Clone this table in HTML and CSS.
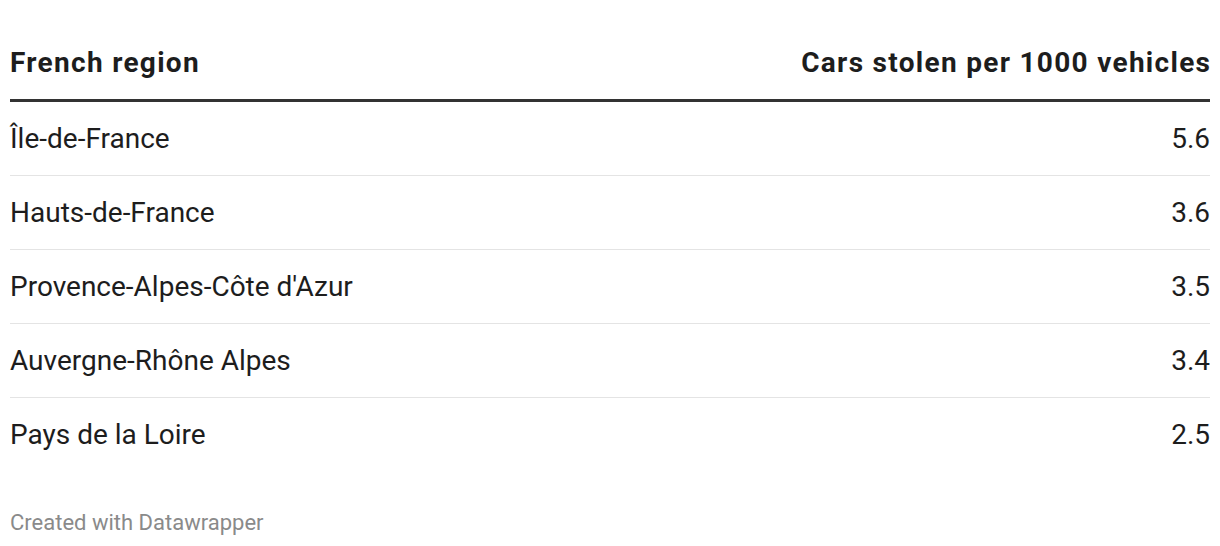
FILE: index.html
```html
<!DOCTYPE html>
<html lang="en">
<head>
<meta charset="utf-8">
<title>Cars stolen per 1000 vehicles</title>
<link rel="stylesheet" href="styles.css">
</head>
<body>
<div class="chart">
  <div class="table">
    <div class="row head">
      <div class="cell">French region</div>
      <div class="cell num">Cars stolen per 1000 vehicles</div>
    </div>
    <div class="row">
      <div class="cell">Île-de-France</div>
      <div class="cell num">5.6</div>
    </div>
    <div class="row">
      <div class="cell">Hauts-de-France</div>
      <div class="cell num">3.6</div>
    </div>
    <div class="row">
      <div class="cell">Provence-Alpes-Côte d'Azur</div>
      <div class="cell num">3.5</div>
    </div>
    <div class="row">
      <div class="cell">Auvergne-Rhône Alpes</div>
      <div class="cell num">3.4</div>
    </div>
    <div class="row last">
      <div class="cell">Pays de la Loire</div>
      <div class="cell num">2.5</div>
    </div>
  </div>
  <div class="footer">Created with Datawrapper</div>
</div>
</body>
</html>
```

FILE: styles.css
```css
html, body {
  margin: 0;
  padding: 0;
  background: #ffffff;
}
body {
  font-family: Roboto, "Liberation Sans", sans-serif;
  color: #1d1d1d;
}
.chart {
  padding: 0 10px;
}
.table {
  display: flex;
  flex-direction: column;
}
.row {
  display: flex;
  justify-content: space-between;
  align-items: center;
  font-size: 28px;
  line-height: 32px;
  padding: 21px 0 20px;
  border-bottom: 1px solid #e4e4e4;
}
.row.head {
  font-weight: 700;
  letter-spacing: 1.3px;
  align-items: flex-end;
  padding: 47px 0 20px;
  border-bottom: 3px solid #333333;
}
.row.head .num {
  margin-right: -1.3px;
}
.row.last {
  border-bottom: none;
}
.num {
  text-align: right;
}
.footer {
  margin-top: 39px;
  font-size: 22px;
  line-height: 26px;
  color: #8a8a8a;
}
```
